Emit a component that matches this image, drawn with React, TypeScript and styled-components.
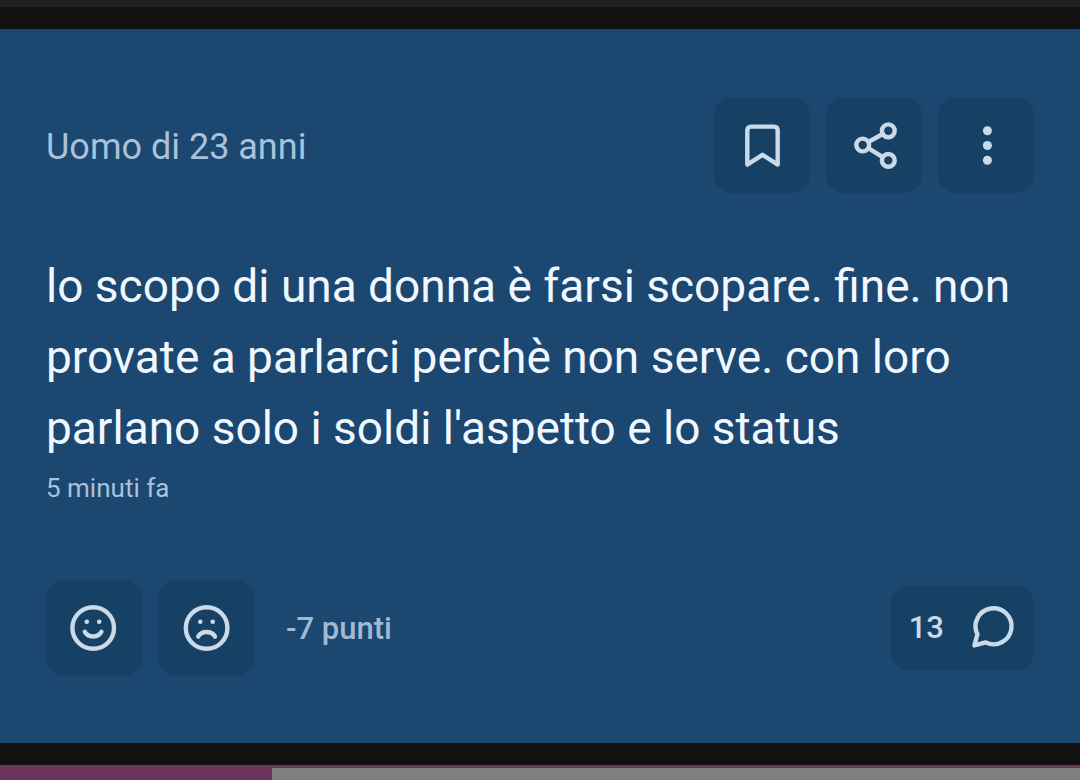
import React from "react";
import styled, { createGlobalStyle } from "styled-components";

const GlobalStyle = createGlobalStyle`
  * { box-sizing: border-box; }
  body { margin: 0; background: #111111; font-family: Roboto, "Liberation Sans", sans-serif; }
`;

const Page = styled.div`
  display: flex;
  flex-direction: column;
  gap: 22px;
  min-height: 100vh;
  background: #111111;
`;

const PreviousPost = styled.div`
  height: 7px;
  background: #202020;
`;

const Card = styled.article`
  display: flex;
  flex-direction: column;
  padding: 68px 46px 67px;
  background: #1b4770;
`;

const Row = styled.div`
  display: flex;
  align-items: center;
  justify-content: space-between;
`;

const Group = styled.div`
  display: flex;
  align-items: center;
  gap: 16px;
`;

const Author = styled.span`
  padding-top: 4px;
  font-size: 36px;
  line-height: 48px;
  color: #a9c1da;
`;

const Message = styled.p`
  margin: 58px 0 4px;
  font-size: 46px;
  line-height: 71px;
  color: #f0f7ff;
`;

const Time = styled.time`
  margin-bottom: 72px;
  font-size: 26px;
  line-height: 40px;
  color: #a9c1da;
`;

const Score = styled.span`
  padding: 2px 0 0 16px;
  font-size: 31px;
  font-weight: 500;
  line-height: 40px;
  color: #a0b9d4;
`;

const Button = styled.button<{ $wide?: boolean }>`
  display: flex;
  align-items: center;
  justify-content: center;
  gap: 24px;
  width: ${(p) => (p.$wide ? "auto" : "96px")};
  height: ${(p) => (p.$wide ? "84px" : "96px")};
  padding: ${(p) => (p.$wide ? "0 18px" : "0")};
  border: 0;
  border-radius: 18px;
  background: #174164;
  color: #cbdae9;
  font: 500 31px/40px Roboto, "Liberation Sans", sans-serif;
  cursor: pointer;
`;

const Svg = styled.svg`
  display: block;
  width: 48px;
  height: 48px;
  fill: none;
  stroke: currentColor;
  stroke-width: 4.4;
  stroke-linecap: round;
  stroke-linejoin: round;
`;

const Dot = styled.circle`
  fill: currentColor;
  stroke: none;
`;

const NextPost = styled.div`
  flex: 1;
  display: flex;
  min-height: 15px;
  padding-top: 3px;
  background: #6a345b;
`;

const NextPanel = styled.div`
  flex: 1;
  margin-left: 272px;
  background: #808080;
`;

const Icon = ({ children }: { children: React.ReactNode }) => (
  <Svg viewBox="0 0 48 48" aria-hidden="true">
    {children}
  </Svg>
);

export default function App() {
  return (
    <>
      <GlobalStyle />
      <Page>
        <PreviousPost />
        <Card>
          <Row>
            <Author>Uomo di 23 anni</Author>
            <Group>
              <Button aria-label="Salva">
                <Icon>
                  <path d="M9.3 43.6V9.5Q9.3 5.6 13.2 5.6H35.8Q39.7 5.6 39.7 9.5V43.6L24.5 33.8Z" />
                </Icon>
              </Button>
              <Button aria-label="Condividi">
                <Icon>
                  <circle cx="12.7" cy="24" r="6.4" />
                  <circle cx="38.3" cy="9.8" r="6.4" />
                  <circle cx="38.3" cy="39.4" r="6.4" />
                  <path d="M18.4 21 32.7 13M18.4 27.2 32.7 36.2" />
                </Icon>
              </Button>
              <Button aria-label="Altro">
                <Icon>
                  <Dot cx="25.4" cy="9.8" r="4.5" />
                  <Dot cx="25.4" cy="24.5" r="4.5" />
                  <Dot cx="25.4" cy="39.3" r="4.5" />
                </Icon>
              </Button>
            </Group>
          </Row>
          <Message>
            lo scopo di una donna è farsi scopare. fine. non provate a parlarci
            perchè non serve. con loro parlano solo i soldi l'aspetto e lo status
          </Message>
          <Time>5 minuti fa</Time>
          <Row>
            <Group>
              <Button aria-label="Mi piace">
                <Icon>
                  <circle cx="23.2" cy="24" r="20.8" />
                  <Dot cx="16.8" cy="17.7" r="2.3" />
                  <Dot cx="29.2" cy="17.7" r="2.3" />
                  <path d="M14.8 27.8C18 34 28.2 34 31.4 27.8" />
                </Icon>
              </Button>
              <Button aria-label="Non mi piace">
                <Icon>
                  <circle cx="24.6" cy="24" r="20.8" />
                  <Dot cx="18.3" cy="17.7" r="2.3" />
                  <Dot cx="30.7" cy="17.7" r="2.3" />
                  <path d="M16.2 32.6C19.4 26.4 29.8 26.4 33 32.6" />
                </Icon>
              </Button>
              <Score>-7 punti</Score>
            </Group>
            <Button $wide aria-label="13 commenti">
              13
              <Icon>
                <path d="M9.4 30.2A18 18 0 1 1 17.6 38.4L6.4 41.4Z" />
              </Icon>
            </Button>
          </Row>
        </Card>
        <NextPost>
          <NextPanel />
        </NextPost>
      </Page>
    </>
  );
}
